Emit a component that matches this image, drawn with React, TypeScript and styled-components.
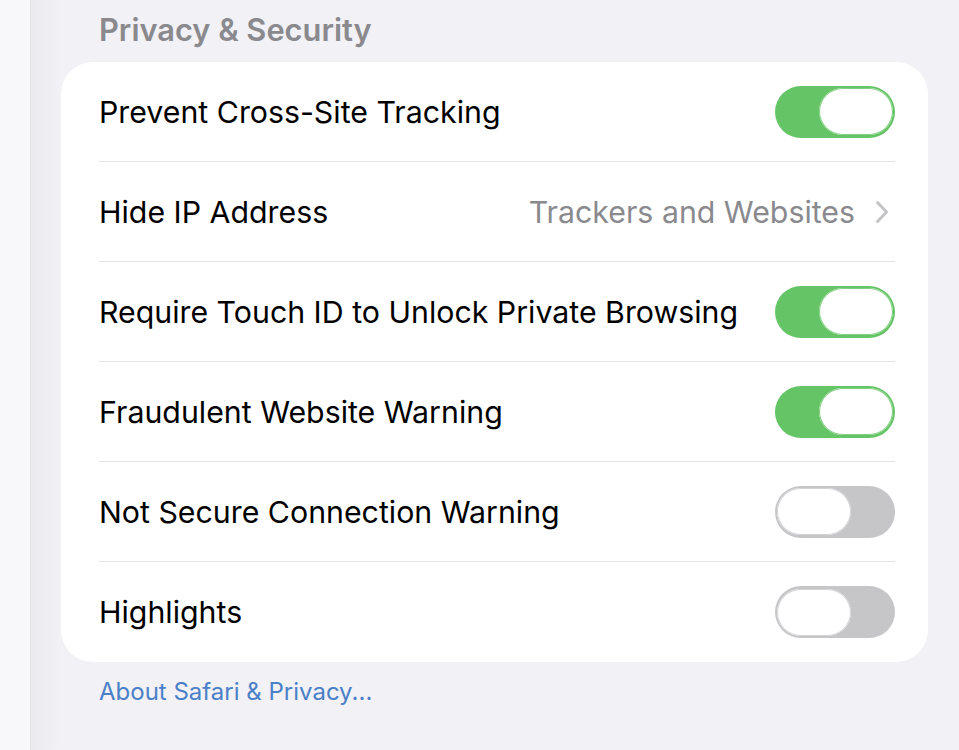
import React from "react";
import styled, { createGlobalStyle } from "styled-components";

const Global = createGlobalStyle`
  html, body { margin: 0; padding: 0; }
  body {
    font-family: Inter, "Noto Sans", "Liberation Sans", sans-serif;
    -webkit-font-smoothing: antialiased;
    background: #f1f1f6;
  }
`;

const Page = styled.div`
  display: flex;
  width: 959px;
  height: 750px;
  overflow: hidden;
`;

const Sidebar = styled.div`
  width: 30px;
  flex: none;
  background: #f8f8fa;
  border-right: 1px solid #e4e4e8;
`;

const Main = styled.main`
  flex: 1;
  display: flex;
  flex-direction: column;
  padding: 0 31px 0 30px;
  background: linear-gradient(90deg, #e9e9ee 0px, #f1f1f6 30px);
`;

const SectionHeader = styled.h2`
  margin: 0;
  height: 62px;
  display: flex;
  align-items: center;
  padding: 0 0 3px 38px;
  box-sizing: border-box;
  font-size: 30.8px;
  font-weight: 600;
  color: #8a8a8e;
  letter-spacing: 0;
`;

const Card = styled.section`
  background: #ffffff;
  border-radius: 32px;
  padding-left: 38px;
  padding-right: 33px;
`;

const Row = styled.div<{ $last?: boolean }>`
  height: 100px;
  box-sizing: border-box;
  display: flex;
  align-items: center;
  justify-content: space-between;
  border-bottom: ${(p) => (p.$last ? "none" : "1px solid #e3e3e6")};
`;

const Label = styled.span`
  font-size: 30.3px;
  color: #000;
  letter-spacing: 0;
`;

const Detail = styled.span`
  display: flex;
  align-items: center;
  gap: 20px;
  font-size: 30.3px;
  color: #8a8a8e;
  letter-spacing: 0;
  padding-right: 6px;
`;

const Track = styled.span<{ $on: boolean }>`
  width: 120px;
  height: 52px;
  border-radius: 26px;
  background: ${(p) => (p.$on ? "#64c466" : "#c6c6c9")};
  display: flex;
  align-items: center;
  justify-content: ${(p) => (p.$on ? "flex-end" : "flex-start")};
  padding: 0 2px;
  box-sizing: border-box;
  flex: none;
`;

const Knob = styled.span<{ $on: boolean }>`
  width: 74px;
  height: 47px;
  border-radius: 24px;
  background: #ffffff;
  box-shadow: 0 0 0 1px ${(p) => (p.$on ? "#7fd07f" : "#d4d4d7")} inset;
`;

const Footer = styled.a`
  display: block;
  padding: 15px 0 0 38px;
  font-size: 24px;
  color: #4a80c7;
  text-decoration: none;
  letter-spacing: 0;
`;

const Chevron = () => (
  <svg width="14" height="24" viewBox="0 0 14 24" fill="none">
    <path d="M2.5 2.5 L11.5 12 L2.5 21.5" stroke="#c4c4c7" strokeWidth="3" strokeLinecap="round" strokeLinejoin="round" />
  </svg>
);

const Toggle = ({ on }: { on: boolean }) => (
  <Track $on={on}>
    <Knob $on={on} />
  </Track>
);

type Item = { label: string; on?: boolean; detail?: string };

const items: Item[] = [
  { label: "Prevent Cross-Site Tracking", on: true },
  { label: "Hide IP Address", detail: "Trackers and Websites" },
  { label: "Require Touch ID to Unlock Private Browsing", on: true },
  { label: "Fraudulent Website Warning", on: true },
  { label: "Not Secure Connection Warning", on: false },
  { label: "Highlights", on: false },
];

export default function App() {
  return (
    <>
      <Global />
      <Page>
        <Sidebar />
        <Main>
          <SectionHeader>Privacy &amp; Security</SectionHeader>
          <Card>
            {items.map((it, i) => (
              <Row key={it.label} $last={i === items.length - 1}>
                <Label>{it.label}</Label>
                {it.detail ? (
                  <Detail>
                    {it.detail}
                    <Chevron />
                  </Detail>
                ) : (
                  <Toggle on={!!it.on} />
                )}
              </Row>
            ))}
          </Card>
          <Footer href="#">About Safari &amp; Privacy...</Footer>
        </Main>
      </Page>
    </>
  );
}
